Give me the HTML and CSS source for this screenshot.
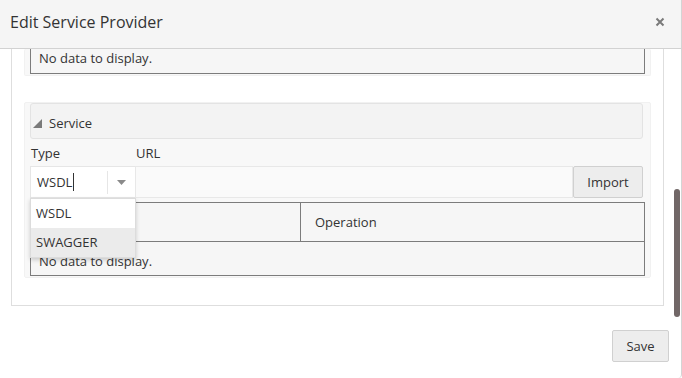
FILE: index.html
```html
<!doctype html>
<html lang="en">
  <head>
    <meta charset="UTF-8" />
    <title>Edit Service Provider</title>
    <link rel="stylesheet" href="styles.css">
  </head>
  <body>
    <div class="dialog">
      <div class="dialog-header">
        <span class="dialog-title">Edit Service Provider</span>
        <svg class="dialog-close" width="10" height="10" viewBox="0 0 10 10">
          <path d="M1.5 1.5 L8.5 8.5 M8.5 1.5 L1.5 8.5" stroke="#7a7a7a" stroke-width="2" />
        </svg>
      </div>

      <div class="dialog-body">
        <div class="panel">
          <!-- previous section, scrolled mostly out of view -->
          <div class="section section-scrolled">
            <div class="grid grid-tail">
              <div class="grid-empty">No data to display.</div>
            </div>
          </div>

          <div class="section">
            <div class="section-header">
              <svg class="section-toggle" width="9" height="9" viewBox="0 0 9 9">
                <polygon points="9,0 9,9 0,9" fill="#7a7a7a" />
              </svg>
              <span>Service</span>
            </div>

            <div class="field-labels">
              <label class="label-type">Type</label>
              <label class="label-url">URL</label>
            </div>

            <div class="field-row">
              <div class="select">
                <div class="select-value"><span class="caret-text">WSDL</span></div>
                <div class="select-arrow">
                  <svg width="9" height="5" viewBox="0 0 9 5">
                    <polygon points="0,0 9,0 4.5,5" fill="#8a8a8a" />
                  </svg>
                </div>
                <ul class="select-menu">
                  <li>WSDL</li>
                  <li class="active">SWAGGER</li>
                </ul>
              </div>
              <input class="url-input" type="text" />
              <button class="btn btn-import">Import</button>
            </div>

            <div class="grid">
              <div class="grid-head">
                <div class="grid-col grid-col-name"></div>
                <div class="grid-col">Operation</div>
              </div>
              <div class="grid-empty grid-empty-row">No data to display.</div>
            </div>
          </div>
        </div>

        <div class="dialog-footer">
          <button class="btn btn-save">Save</button>
        </div>
      </div>

      <div class="scroll-thumb"></div>
    </div>
  </body>
</html>
```

FILE: styles.css
```css
body {
  margin: 0;
  font-family: 'Open Sans', 'Noto Sans', sans-serif;
  font-size: 13px;
  color: #333;
  background: #fff;
}
.dialog {
  position: relative;
  width: 682px;
  height: 378px;
  box-sizing: border-box;
  border-right: 1px solid #d4d4d4;
  border-radius: 0 0 4px 4px;
  display: flex;
  flex-direction: column;
  overflow: hidden;
}
.dialog-header {
  flex: none;
  background-color: #f5f5f5;
  border-bottom: 1px solid #d2d2d2;
  display: flex;
  align-items: center;
  justify-content: space-between;
  padding: 0 16px 5px 10px;
  height: 43px;
}
.dialog-title {
  font-size: 16px;
  color: #333;
}
.dialog-close {
  margin-top: 1px;
}
.dialog-body {
  flex: 1;
  overflow: hidden;
  padding-left: 11px;
}
.panel {
  width: 653px;
  box-sizing: border-box;
  border: 1px solid #dedede;
  border-top: none;
  padding: 0 12px 27px 12px;
}
.section {
  background-color: #f8f8f8;
  border: 1px solid #f1f1f1;
  border-radius: 2px;
  padding: 0 7px 1px 5px;
  margin-top: 26px;
}
.section-scrolled {
  margin-top: 0;
  border-top: none;
  padding-bottom: 1px;
}
.section-header {
  height: 31px;
  display: flex;
  align-items: center;
  gap: 7px;
  padding: 3px 0 0 2px;
  background-color: #f3f3f3;
  border: 1px solid #e3e3e3;
  border-radius: 3px;
}
.section-toggle {
  margin-top: 1px;
}
.field-labels {
  display: flex;
  padding: 5px 0 4px 1px;
  line-height: 18px;
}
.label-type {
  width: 105px;
}
.field-row {
  display: flex;
  height: 32px;
  margin-bottom: 4px;
}
.select {
  position: relative;
  width: 105px;
  box-sizing: border-box;
  display: flex;
  align-items: center;
  background: #fff;
  border: 1px solid #e6e6e6;
  border-right: none;
}
.select-value {
  flex: 1;
  padding-left: 6px;
  border-right: 1px solid #e6e6e6;
  height: 23px;
  line-height: 23px;
}
.caret-text {
  border-right: 1px solid #333;
  padding-right: 1px;
}
.select-arrow {
  width: 27px;
  display: flex;
  justify-content: center;
}
.select-menu {
  position: absolute;
  top: 31px;
  left: -1px;
  width: 104px;
  margin: 0;
  padding: 0;
  list-style: none;
  background: #fff;
  border: 1px solid #dcdcdc;
  box-shadow: 0 2px 4px rgba(0, 0, 0, 0.18);
  z-index: 2;
}
.select-menu li {
  height: 29px;
  line-height: 29px;
  padding-left: 5px;
}
.select-menu li.active {
  background-color: #ebebeb;
}
.url-input {
  flex: 1;
  margin: 0;
  border: 1px solid #e8e8e8;
  background: #fafafa;
  outline: none;
}
.btn {
  font-family: 'Open Sans', 'Noto Sans', sans-serif;
  font-size: 13px;
  color: #333;
  background-color: #ededed;
  border: 1px solid #d0d0d0;
  border-radius: 2px;
  padding: 0;
}
.btn-import {
  width: 70px;
}
.grid {
  width: 613px;
  border: 1px solid #7c7c7c;
  background-color: #f6f6f6;
}
.grid-tail {
  border-top: none;
}
.grid-head {
  display: flex;
  height: 38px;
  border-bottom: 1px solid #7c7c7c;
}
.grid-col {
  display: flex;
  align-items: center;
  padding-left: 14px;
}
.grid-col-name {
  width: 255px;
  border-right: 1px solid #7c7c7c;
}
.grid-empty {
  padding: 0 8px 6px 8px;
  line-height: 18px;
}
.grid-empty-row {
  height: 33px;
  padding: 10px 8px 0 8px;
  line-height: 18px;
  box-sizing: border-box;
}
.dialog-footer {
  display: flex;
  justify-content: flex-end;
  padding: 24px 12px 0 0;
}
.btn-save {
  width: 57px;
  height: 32px;
}
.scroll-thumb {
  position: absolute;
  top: 189px;
  right: 1px;
  width: 6px;
  height: 128px;
  border-radius: 3px;
  background-color: #716767;
}
```
